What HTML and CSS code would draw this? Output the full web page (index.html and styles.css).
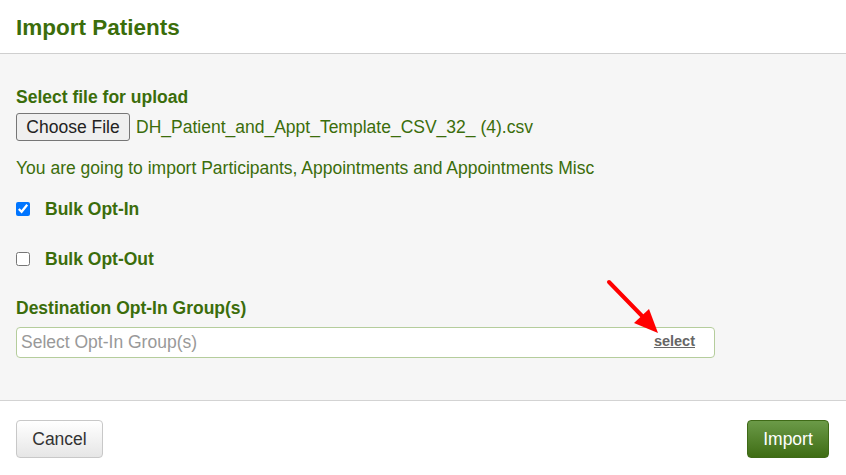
FILE: index.html
```html
<!DOCTYPE html>
<html>
<head>
<meta charset="utf-8">
<link rel="stylesheet" href="styles.css">
</head>
<body>
<div class="modal">
  <div class="modal-header"><h1 class="title">Import Patients</h1></div>
  <div class="modal-body">
    <div class="label">Select file for upload</div>
    <div class="file-row">
      <button class="file-btn">Choose File</button>
      <span class="file-name">DH_Patient_and_Appt_Template_CSV_32_ (4).csv</span>
    </div>
    <p class="info">You are going to import Participants, Appointments and Appointments Misc</p>
    <label class="check-row"><input type="checkbox" class="check" checked><span>Bulk Opt-In</span></label>
    <label class="check-row second"><input type="checkbox" class="check"><span>Bulk Opt-Out</span></label>
    <div class="label dest">Destination Opt-In Group(s)</div>
    <div class="group-field">
      <span class="placeholder">Select Opt-In Group(s)</span>
      <a class="select-link">select</a>
      <svg class="arrow" width="70" height="70" viewBox="0 0 70 70">
        <line x1="9" y1="8" x2="45" y2="45" stroke="#ff0000" stroke-width="4" stroke-linecap="round"/>
        <polygon points="58,59 34,49 49,35" fill="#ff0000"/>
      </svg>
    </div>
  </div>
  <div class="modal-footer">
    <button class="btn cancel">Cancel</button>
    <button class="btn import">Import</button>
  </div>
</div>
</body>
</html>
```
FILE: styles.css
```css
html, body { margin: 0; padding: 0; }
body {
  font-family: "Liberation Sans", Arial, sans-serif;
  background: #fff;
  color: #3b6d0b;
  width: 846px;
  height: 475px;
  overflow: hidden;
}
.modal { display: flex; flex-direction: column; height: 475px; }
.modal-header {
  border-bottom: 1px solid #cfcfcf;
  display: flex;
  align-items: center;
  padding-left: 16px;
  box-sizing: border-box;
  height: 54px;
}
.title {
  margin: 0;
  font-size: 22.5px;
  line-height: 26px;
  font-weight: bold;
  color: #3b6d0b;
  position: relative;
  top: 1px;
}
.modal-body {
  background: #f6f6f6;
  height: 347px;
  box-sizing: border-box;
  padding: 33px 16px 0 16px;
  border-bottom: 1px solid #d3d3d3;
  position: relative;
}
.label { font-weight: bold; font-size: 17.5px; line-height: 20px; }
.file-row { display: flex; align-items: center; margin-top: 6px; }
.file-btn {
  font-family: "Liberation Sans", Arial, sans-serif;
  font-size: 17.5px;
  color: #222;
  background: #efefef;
  border: 1px solid #767676;
  border-radius: 3px;
  height: 28px;
  width: 114px;
  padding: 0;
}
.file-name { font-size: 17.5px; margin-left: 6px; }
.info { margin: 17px 0 0 0; font-size: 17.5px; line-height: 20px; }
.check-row {
  display: flex;
  align-items: center;
  font-weight: bold;
  font-size: 17.5px;
  margin-top: 21px;
  height: 20px;
}
.check-row.second { margin-top: 30px; }
.check {
  margin: 0 15px 0 0;
  width: 14px;
  height: 14px;
  accent-color: #0075ff;
}
.dest { margin-top: 29px; }
.group-field {
  margin-top: 9px;
  width: 699px;
  height: 31px;
  box-sizing: border-box;
  background: #fff;
  border: 1px solid #b5cd9c;
  border-radius: 4px;
  display: flex;
  align-items: center;
  justify-content: space-between;
  padding: 0 19px 0 4px;
  position: relative;
}
.placeholder { color: #999; font-size: 17.5px; }
.select-link {
  color: #666;
  font-weight: bold;
  font-size: 14.5px;
  text-decoration: underline;
  position: relative;
  top: -2px;
}
.arrow { position: absolute; left: 583px; top: -54px; }
.modal-footer {
  flex: 1;
  display: flex;
  align-items: flex-start;
  justify-content: space-between;
  padding: 19px 17px 0 16px;
}
.btn {
  font-family: "Liberation Sans", Arial, sans-serif;
  font-size: 17.5px;
  height: 38px;
  border-radius: 4px;
  padding: 0;
}
.cancel {
  width: 87px;
  color: #333;
  background: linear-gradient(#ffffff, #e6e6e6);
  border: 1px solid #c8c8c8;
}
.import {
  width: 82px;
  color: #fff;
  background: linear-gradient(#6b9a48, #3f6d14);
  border: 1px solid #3f6a17;
}
```
